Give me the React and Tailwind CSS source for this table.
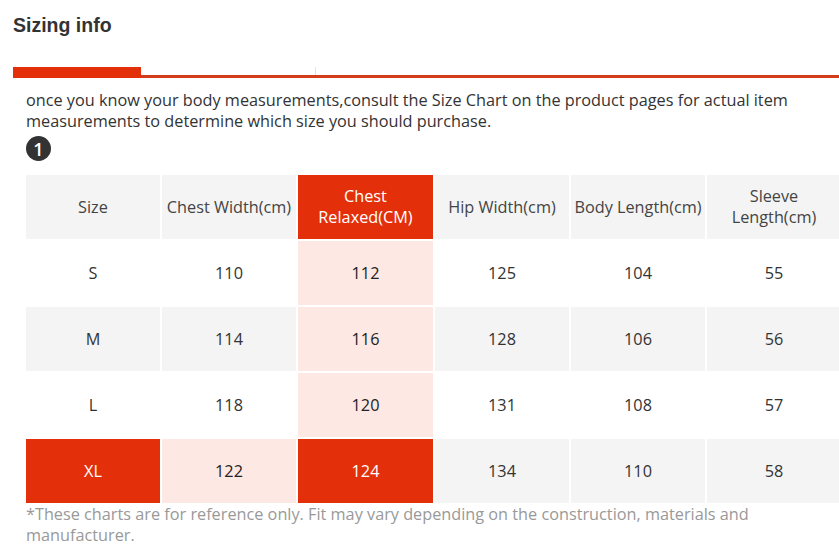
import React from "react";

const RED = "bg-[#e3300a] text-white";
const PINK = "bg-[#fde8e3] text-[#222]";
const GRAY = "bg-[#f4f4f4] text-[#333]";
const WHITE = "bg-white text-[#333]";

const headers = ["Size", "Chest Width(cm)", "Chest\nRelaxed(CM)", "Hip Width(cm)", "Body Length(cm)", "Sleeve\nLength(cm)"];
const rows = [
  ["S", "110", "112", "125", "104", "55"],
  ["M", "114", "116", "128", "106", "56"],
  ["L", "118", "120", "131", "108", "57"],
  ["XL", "122", "124", "134", "110", "58"],
];

function cellClass(r, c) {
  if (r === -1) return c === 2 ? RED : GRAY + " text-[#444]";
  if (r === 3) {
    if (c === 0 || c === 2) return RED;
    if (c === 1) return PINK;
    return GRAY;
  }
  if (c === 2) return PINK;
  return r % 2 === 1 ? GRAY : WHITE;
}

export default function App() {
  return (
    <div className="w-[839px] h-[553px] overflow-hidden bg-white" style={{ fontFamily: "'Open Sans', sans-serif" }}>
      <div className="pl-[13px]">
        <h2 className="pt-[13px] text-[19.5px] leading-[24px] font-bold text-[#333]" style={{ fontFamily: "'Liberation Sans', Arial, sans-serif" }}>
          Sizing info
        </h2>
        <div className="mt-[30px] flex items-end h-[11px]">
          <div className="w-[128px] h-[11px] bg-[#e3300a]" />
          <div className="flex-1 h-[3px] bg-[#d23c16] relative">
            <div className="absolute left-[174px] bottom-[3px] w-px h-[8px] bg-[#e2e2e2]" />
          </div>
        </div>
        <div className="pl-[13px] pt-[12px]">
          <p className="text-[16.25px] leading-[21px] text-[#333] w-[800px]">
            once you know your body measurements,consult the Size Chart on the product pages for actual item measurements to determine which size you should purchase.
          </p>
          <div className="mt-[4px] w-[25px] h-[25px] rounded-full bg-[#333] text-white flex items-center justify-center text-[18px] font-semibold leading-none">
            1
          </div>
          <div className="mt-[14px] grid grid-cols-[134px_134px_135px_134px_134px_134px] gap-[2px] w-[815px]">
            {headers.map((h, c) => (
              <div key={"h" + c} className={`h-[64px] flex items-center justify-center text-center text-[16.25px] leading-[21px] whitespace-pre-line ${cellClass(-1, c)}`}>
                {h}
              </div>
            ))}
            {rows.map((row, r) =>
              row.map((v, c) => (
                <div key={r + "-" + c} className={`h-[64px] flex items-center justify-center text-[16.25px] ${cellClass(r, c)}`}>
                  {v}
                </div>
              ))
            )}
          </div>
          <p className="pt-[1px] text-[16.25px] leading-[21px] text-[#999] w-[770px]">
            *These charts are for reference only. Fit may vary depending on the construction, materials and manufacturer.
          </p>
        </div>
      </div>
    </div>
  );
}
